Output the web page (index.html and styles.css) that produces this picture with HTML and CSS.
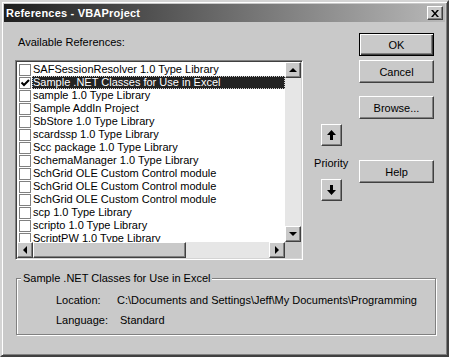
FILE: index.html
```html
<!DOCTYPE html>
<html lang="en">
<head>
  <meta charset="UTF-8">
  <title>References - VBAProject</title>
  <link rel="stylesheet" href="styles.css">
</head>
<body>
  <div class="window">
    <div class="titlebar">
      <span class="title">References - VBAProject</span>
      <button class="close" type="button">
        <svg width="8" height="7" viewBox="0 0 8 7"><path d="M0 0h2l2 2.5L6 0h2L5 3.5 8 7H6L4 4.5 2 7H0l3-3.5z" fill="#000"/></svg>
      </button>
    </div>

    <div class="content">
      <div class="top">
        <div class="left">
          <div class="label">Available References:</div>
          <div class="listbox">
            <div class="list-main">
              <div class="rows" id="rows"></div>
              <div class="vscroll">
                <div class="sbtn"><span class="tri up"></span></div>
                <div class="track"></div>
                <div class="sbtn"><span class="tri down"></span></div>
              </div>
            </div>
            <div class="hscroll">
              <div class="sbtn"><span class="tri left"></span></div>
              <div class="thumb"></div>
              <div class="track"></div>
              <div class="sbtn"><span class="tri right"></span></div>
              <div class="corner"></div>
            </div>
          </div>
        </div>

        <div class="priority">
          <button class="arrow-btn" type="button">
            <svg width="9" height="10" viewBox="0 0 9 10"><path d="M4.5 0L9 5H6v5H3V5H0z" fill="#000"/></svg>
          </button>
          <div class="priority-label">Priority</div>
          <button class="arrow-btn" type="button">
            <svg width="9" height="10" viewBox="0 0 9 10"><path d="M4.5 10L9 5H6V0H3v5H0z" fill="#000"/></svg>
          </button>
        </div>

        <div class="buttons">
          <button class="btn default" type="button">OK</button>
          <button class="btn cancel" type="button">Cancel</button>
          <button class="btn browse" type="button">Browse...</button>
          <button class="btn help" type="button">Help</button>
        </div>
      </div>

      <fieldset class="group">
        <legend>Sample .NET Classes for Use in Excel</legend>
        <div class="info-row"><span class="info-key">Location:</span><span class="info-val">C:\Documents and Settings\Jeff\My Documents\Programming</span></div>
        <div class="info-row"><span class="info-key">Language:</span><span class="info-val lang">Standard</span></div>
      </fieldset>
    </div>
  </div>

  <script>
    const refs = [
      { name: 'SAFSessionResolver 1.0 Type Library' },
      { name: 'Sample .NET Classes for Use in Excel', checked: true, selected: true },
      { name: 'sample 1.0 Type Library' },
      { name: 'Sample AddIn Project' },
      { name: 'SbStore 1.0 Type Library' },
      { name: 'scardssp 1.0 Type Library' },
      { name: 'Scc package 1.0 Type Library' },
      { name: 'SchemaManager 1.0 Type Library' },
      { name: 'SchGrid OLE Custom Control module' },
      { name: 'SchGrid OLE Custom Control module' },
      { name: 'SchGrid OLE Custom Control module' },
      { name: 'scp 1.0 Type Library' },
      { name: 'scripto 1.0 Type Library' },
      { name: 'ScriptPW 1.0 Type Library' },
    ];

    const rows = document.getElementById('rows');
    refs.forEach(ref => {
      const row = document.createElement('div');
      row.className = 'row' + (ref.selected ? ' selected' : '');
      const check = ref.checked
        ? '<svg width="10" height="10" viewBox="0 0 10 10"><path d="M1.5 4.5l2.5 2.5 5-5" stroke="#000" stroke-width="2" fill="none"/></svg>'
        : '';
      row.innerHTML = `<span class="check">${check}</span><span class="name">${ref.name}</span>`;
      rows.appendChild(row);
    });
  </script>
</body>
</html>
```

FILE: styles.css
```css
/* classic dialog, greyscale */
body {
  margin: 0;
  padding: 0;
  background-color: #c9c9c9;
  font-family: Tahoma, "Liberation Sans", Arial, sans-serif;
  font-size: 11px;
  color: #000;
}

.window {
  width: 449px;
  height: 357px;
  box-sizing: border-box;
  border: 2px solid;
  border-color: #d4d4d4 #404040 #404040 #d4d4d4;
  box-shadow: inset 1px 1px 0 #fff, inset -1px -1px 0 #808080;
  background-color: #c9c9c9;
  padding: 2px;
  overflow: hidden;
}

.titlebar {
  height: 18px;
  display: flex;
  align-items: center;
  justify-content: space-between;
  padding: 0 2px;
  background: linear-gradient(to right, #1e1e1e, #b8b8b8);
}

.title {
  color: #fff;
  font-weight: bold;
  font-size: 11px;
  letter-spacing: 0.2px;
}

.close,
.btn,
.arrow-btn,
.sbtn,
.thumb {
  background-color: #c9c9c9;
  border: 1px solid;
  border-color: #fff #404040 #404040 #fff;
  box-shadow: inset -1px -1px 0 #808080;
  padding: 0;
  margin: 0;
  font-family: inherit;
  font-size: 11px;
  color: #000;
  box-sizing: border-box;
}

.close {
  width: 16px;
  height: 14px;
  display: flex;
  align-items: center;
  justify-content: center;
}

.content {
  padding: 12px 11px 0 11px;
}

.top {
  display: flex;
}

.left {
  width: 290px;
}

.label {
  height: 13px;
  line-height: 13px;
  padding-left: 3px;
  margin-top: 2px;
}

.listbox {
  margin-top: 11px;
  height: 200px;
  box-sizing: border-box;
  border: 1px solid;
  border-color: #808080 #fff #fff #808080;
  box-shadow: inset 1px 1px 0 #404040, inset -1px -1px 0 #d4d4d4;
  padding: 1px;
  background-color: #fff;
  display: flex;
  flex-direction: column;
}

.list-main {
  flex: 1;
  display: flex;
  overflow: hidden;
}

.rows {
  flex: 1;
  padding-top: 1px;
  overflow: hidden;
}

.row {
  height: 13px;
  display: flex;
  align-items: center;
  white-space: nowrap;
}

.check {
  width: 12px;
  height: 12px;
  box-sizing: border-box;
  margin-left: 2px;
  border: 1px solid #808080;
  background-color: #fff;
  display: flex;
  align-items: center;
  justify-content: center;
  flex-shrink: 0;
}

.name {
  flex: 1;
  height: 13px;
  line-height: 13px;
  padding-left: 1px;
  margin-left: 1px;
  box-sizing: border-box;
}

.row.selected .name {
  background-color: #222;
  color: #fff;
  outline: 1px dotted #cfcfcf;
  outline-offset: -1px;
}

.vscroll {
  width: 16px;
  display: flex;
  flex-direction: column;
}

.hscroll {
  height: 16px;
  display: flex;
}

.sbtn {
  width: 16px;
  height: 16px;
  flex-shrink: 0;
  display: flex;
  align-items: center;
  justify-content: center;
}

.track {
  flex: 1;
  background-color: #e6e6e6;
}

.thumb {
  width: 153px;
  height: 16px;
  flex-shrink: 0;
}

.corner {
  width: 16px;
  height: 16px;
  background-color: #c9c9c9;
}

.tri {
  width: 0;
  height: 0;
  border-style: solid;
  border-color: transparent;
}

.tri.up {
  border-width: 0 4px 4px 4px;
  border-bottom-color: #000;
}

.tri.down {
  border-width: 4px 4px 0 4px;
  border-top-color: #000;
}

.tri.left {
  border-width: 4px 4px 4px 0;
  border-right-color: #000;
}

.tri.right {
  border-width: 4px 0 4px 4px;
  border-left-color: #000;
}

.priority {
  width: 56px;
  display: flex;
  flex-direction: column;
  align-items: center;
  padding-top: 90px;
}

.arrow-btn {
  width: 21px;
  height: 22px;
  display: flex;
  align-items: center;
  justify-content: center;
}

.priority-label {
  height: 13px;
  line-height: 13px;
  margin: 11px 0 9px 0;
}

.buttons {
  display: flex;
  flex-direction: column;
  margin-top: -1px;
}

.btn {
  width: 75px;
  height: 23px;
  text-align: center;
}

.btn.default {
  border-color: #000;
  box-shadow: inset 1px 1px 0 #fff, inset -1px -1px 0 #404040, inset -2px -2px 0 #808080;
}

.btn.cancel {
  margin-top: 4px;
}

.btn.browse {
  margin-top: 13px;
}

.btn.help {
  margin-top: 41px;
}

.group {
  margin: 12px 0 0 1px;
  width: 420px;
  height: 63px;
  box-sizing: border-box;
  border: 1px solid #808080;
  box-shadow: 1px 1px 0 #fff, inset 1px 1px 0 #fff;
  padding: 9px 0 0 4px;
}

.group legend {
  padding: 0 2px;
  line-height: 13px;
  background-color: #c9c9c9;
}

.info-row {
  display: flex;
  height: 13px;
  line-height: 13px;
  margin: 0 0 7px 35px;
}

.info-key {
  width: 61px;
}

.info-val.lang {
  padding-left: 3px;
}
```
